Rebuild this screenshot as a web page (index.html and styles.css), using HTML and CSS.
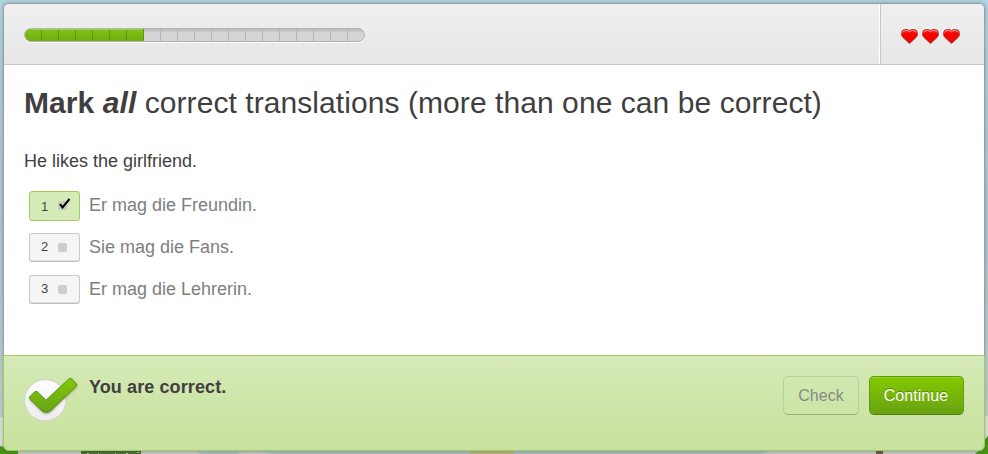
FILE: index.html
```html
<!DOCTYPE html>
<html lang="en">
<head>
<meta charset="utf-8">
<title>Lesson</title>
<link rel="stylesheet" href="styles.css">
</head>
<body>
<svg class="scene" viewBox="0 0 988 454" aria-hidden="true">
  <path fill="#dedfe1" d="M0 417h10v37H0zM978 416h10v38h-10z"/>
  <path fill="#a9bbc2" d="M0 450h988v4H0z"/>
  <path fill="#c5c5c5" d="M10 450h184l7 4H10zM237 454q8-5 36 0zM772 450h205v4H763z"/>
  <path fill="#b5b282" d="M470 450h44v4h-44z"/>
  <path fill="#4a7138" d="M81 450h60v4H81z"/>
  <path stroke="#b8c2ae" d="M87 453.500h2m9 0h1m16 0h1m10 0h2m9-1h2"/>
  <path fill="#755b48" d="M876 450h7v4h-7z"/>
  <path fill="#479615" d="M0 446q8 1 18 5v3H0zM988 436q-4 3-5 11l-8 7h13z"/>
</svg>
<main class="card">
  <header class="top">
    <div class="track"><div class="fill"></div></div>
    <div class="hearts">
      <svg class="heart" viewBox="0 0 17 16"><use href="#heart"/></svg>
      <svg class="heart" viewBox="0 0 17 16"><use href="#heart"/></svg>
      <svg class="heart" viewBox="0 0 17 16"><use href="#heart"/></svg>
    </div>
  </header>
  <section class="question">
    <h1><b>Mark <i>all</i></b> correct translations (more than one can be correct)</h1>
    <p class="prompt">He likes the girlfriend.</p>
    <ul class="options">
      <li><span class="key chosen">1<span class="box"><svg class="tick" viewBox="0 0 12 11"><path d="M1 6l2.500 3.500L10.500 1" fill="none" stroke="#000" stroke-width="2"/></svg></span></span>Er mag die Freundin.</li>
      <li><span class="key">2<span class="box"></span></span>Sie mag die Fans.</li>
      <li><span class="key">3<span class="box"></span></span>Er mag die Lehrerin.</li>
    </ul>
  </section>
  <footer class="result">
    <svg class="badge" viewBox="0 0 56 48">
      <defs>
        <linearGradient id="disc" x2="0" y2="1"><stop stop-color="#fff"/><stop offset="1" stop-color="#ececee"/></linearGradient>
        <linearGradient id="green" x2="0" y2="1"><stop stop-color="#82c80a"/><stop offset="1" stop-color="#69a316"/></linearGradient>
        <linearGradient id="red" x2="0" y2="1"><stop stop-color="#f22"/><stop offset=".3" stop-color="#f80500"/><stop offset="1" stop-color="#ee0800"/></linearGradient>
        <g id="heart">
          <path d="M8.500 14.500L2 8.500Q.5 7 .5 4.500Q.5.500 4.500.500H5.500Q7.500.500 8.500 1.700Q9.500.500 11.500.500H12.500Q16.500.500 16.500 4.500Q16.500 7 15 8.500z" fill="url(#red)" stroke="#a33030" stroke-width=".9"/>
          <path d="M1.700 3.500Q2.500 1.600 4.500 1.600H5.500Q7.500 1.600 8.500 2.800Q9.500 1.600 11.500 1.600H12.500Q14.500 1.600 15.300 3.500" fill="none" stroke="#ffa5a5" stroke-width=".9"/>
        </g>
      </defs>
      <circle cx="21.300" cy="24.300" r="20.600" fill="url(#disc)" stroke="#d0d5cb"/>
      <path class="check" d="M6 20.500L10.500 16Q12 14.700 13.500 16L22 24.300L44.800 3Q46.300 1.700 47.700 3L52.300 7.600Q53.300 8.900 52.300 10.200L27 34.500Q22.300 38.500 17.500 34.500L6 23.200Q4.800 21.800 6 20.500z" fill="url(#green)" stroke="#599511"/>
    </svg>
    <strong class="verdict">You are correct.</strong>
    <div class="actions">
      <button class="btn" disabled>Check</button>
      <button class="btn primary">Continue</button>
    </div>
  </footer>
</main>
</body>
</html>
```
FILE: styles.css
```css
* { box-sizing: border-box; }
html, body { height: 100%; }
body {
  margin: 0;
  padding: 3px;
  overflow: hidden;
  font: 18px/20px "Liberation Sans", Arial, sans-serif;
  color: #3f3f3f;
  background: linear-gradient(#b0d4e2, #acc8d2 50%, #c0ced4 92%);
}
.scene { position: absolute; inset: 0; width: 988px; height: 454px; }
.card {
  position: relative;
  display: flex;
  flex-direction: column;
  width: 982px;
  height: 448px;
  background: #fff;
  border: 1px solid #999fa2;
  border-radius: 6px;
  box-shadow: 0 0 4px rgba(0, 0, 0, .25);
}
.top {
  display: flex;
  justify-content: space-between;
  height: 61px;
  padding-left: 20px;
  background: linear-gradient(#efefef, #e7e7e7);
  border-bottom: 1px solid #c9c9c9;
  border-radius: 5px 5px 0 0;
}
.track {
  width: 341px;
  height: 14px;
  margin-top: 24px;
  overflow: hidden;
  border: 1px solid #b4b4b4;
  border-radius: 7px;
  background:
    linear-gradient(#b8b8b8, rgba(190, 190, 190, 0) 4px),
    repeating-linear-gradient(90deg, #d5d5d5 0 16px, #b5b5b5 16px 17px);
  box-shadow: 0 1px #fff;
}
.fill {
  width: 120px;
  height: 14px;
  margin: -1px;
  border: 1px solid #5c970b;
  border-radius: 7px 0 0 7px;
  background:
    linear-gradient(#9bd044 0 1px, transparent 1px),
    repeating-linear-gradient(90deg, transparent 0 16px, #5c970b 16px 17px),
    linear-gradient(#80c41a, #70ad0c);
}
.hearts {
  display: flex;
  gap: 4px;
  width: 104px;
  padding: 25px 0 0 20px;
  border-left: 1px solid #c6c6c6;
  box-shadow: -1px 0 #fff;
}
.heart { width: 17px; height: 16px; }
.question { flex: 1; padding: 20px 20px 0; }
h1 {
  margin: 0;
  font-size: 30px;
  line-height: 36px;
  font-weight: 400;
  letter-spacing: .07px;
  white-space: nowrap;
}
.prompt { margin: 30px 0 20px; }
.options { margin: 0; padding: 0 0 0 5px; list-style: none; color: #7e7e7e; }
.options li { display: flex; gap: 9px; height: 42px; line-height: 29px; }
.key {
  display: flex;
  align-items: center;
  gap: 10px;
  width: 51px;
  height: 29px;
  padding: 0 0 1px 11px;
  font-size: 13px;
  line-height: 26px;
  color: #444;
  background: #f5f5f5;
  border: 1px solid #cacaca;
  border-bottom-color: #bebebe;
  border-radius: 3px;
  box-shadow: inset 0 -1px #dedede;
}
.chosen { height: 30px; padding: 1px 0 0 11px; background: #d6eab7; border-color: #a1cb5e; box-shadow: none; }
.box { position: relative; width: 9px; height: 9px; margin-top: 1px; border-radius: 2px; background: #cdcdcd; }
.chosen .box { margin-top: -3px; background: #c5cbbd; }
.tick { position: absolute; left: 1px; top: -3px; width: 12px; height: 11px; }
.result {
  display: flex;
  height: 96px;
  margin: 0 -1px -1px;
  padding: 20px 20px 0;
  background: linear-gradient(#d5eab7, #c8e19c);
  border: 1px solid #a0cb60;
  border-radius: 0 0 6px 6px;
}
.badge { width: 56px; height: 48px; }
.check { filter: drop-shadow(0 1px 1px rgba(0, 0, 0, .3)); }
.verdict { margin: 1px 0 0 9px; letter-spacing: .1px; }
.actions { display: flex; gap: 10px; margin-left: auto; }
.btn {
  width: 76px;
  height: 39px;
  padding: 0;
  font: 16px/20px "Liberation Sans", Arial, sans-serif;
  color: #848984;
  background: transparent;
  border: 1px solid #b9cf9b;
  border-bottom-color: #98ad7c;
  border-radius: 5px;
}
.primary {
  width: 95px;
  padding-right: 1px;
  letter-spacing: .05px;
  color: #fff;
  text-shadow: 0 -1px rgba(0, 0, 0, .3);
  background: linear-gradient(#83c900, #69a214);
  border-color: #609d0c;
  border-bottom-color: #4d8108;
  box-shadow: inset 0 1px #94d12b;
}
```
